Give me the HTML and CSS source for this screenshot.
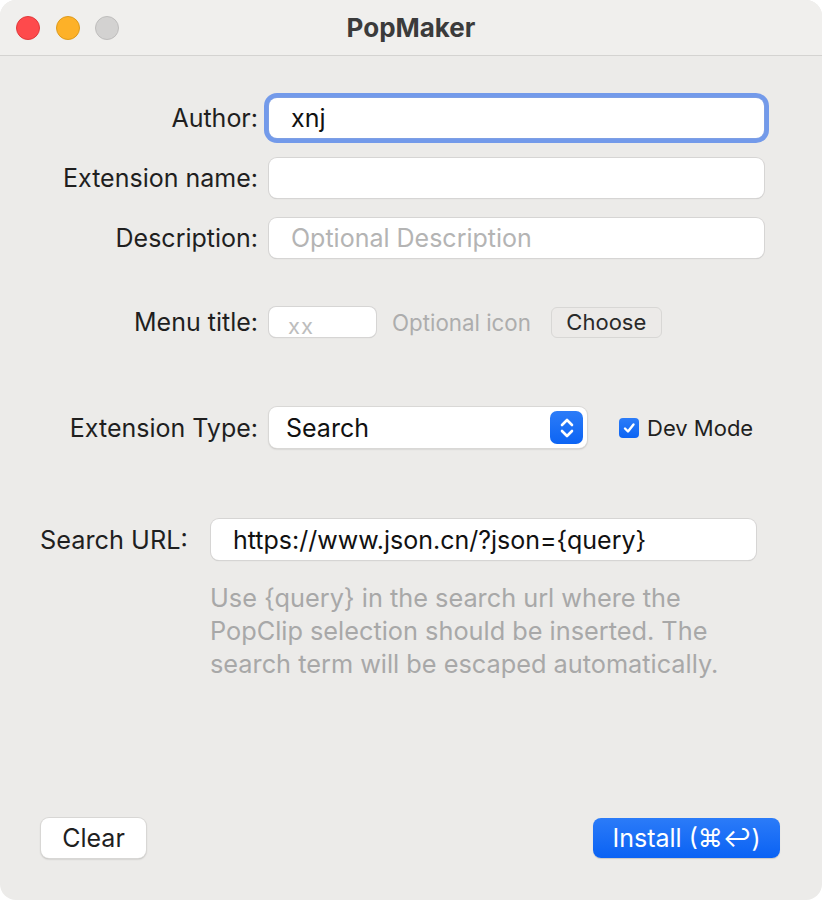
FILE: index.html
```html
<!DOCTYPE html>
<html>
<head>
<meta charset="utf-8">
<link rel="stylesheet" href="styles.css">
</head>
<body>
<div class="window">
  <div class="titlebar">
    <div class="lights">
      <span class="light red"></span>
      <span class="light yellow"></span>
      <span class="light grey"></span>
    </div>
    <div class="title">PopMaker</div>
  </div>
  <div class="content">
    <div class="row row-author">
      <label class="label">Author:</label>
      <div class="field focused"><span class="value">xnj</span></div>
    </div>
    <div class="row">
      <label class="label">Extension name:</label>
      <div class="field"></div>
    </div>
    <div class="row">
      <label class="label">Description:</label>
      <div class="field"><span class="placeholder">Optional Description</span></div>
    </div>
    <div class="row row-menu">
      <label class="label">Menu title:</label>
      <div class="field small"><span class="placeholder">xx</span></div>
      <span class="hint">Optional icon</span>
      <button class="choose">Choose</button>
    </div>
    <div class="row row-type">
      <label class="label">Extension Type:</label>
      <div class="popup">
        <span class="value">Search</span>
        <span class="stepper">
          <svg width="20" height="26" viewBox="0 0 20 26"><path d="M5 10 L10 5 L15 10 M5 16 L10 21 L15 16" fill="none" stroke="#fff" stroke-width="2.6" stroke-linecap="round" stroke-linejoin="round"/></svg>
        </span>
      </div>
      <span class="check">
        <span class="box"><svg width="14" height="14" viewBox="0 0 14 14"><path d="M3 7.5 L6 10.5 L11.5 3.5" fill="none" stroke="#fff" stroke-width="2.4" stroke-linecap="round" stroke-linejoin="round"/></svg></span>
        <span class="check-label">Dev Mode</span>
      </span>
    </div>
    <div class="url-row">
      <label class="url-label">Search URL:</label>
      <div class="field url"><span class="value">https://www.json.cn/?json={query}</span></div>
    </div>
    <p class="help">Use {query} in the search url where the PopClip selection should be inserted. The search term will be escaped automatically.</p>
    <div class="footer">
      <button class="btn clear">Clear</button>
      <button class="btn install">Install (⌘↩)</button>
    </div>
  </div>
</div>
</body>
</html>
```
FILE: styles.css
```css
html, body {
  margin: 0;
  padding: 0;
  background: #ffffff;
}
body {
  font-family: Inter, "Liberation Sans", sans-serif;
  color: #1f1f1f;
}
.window {
  width: 822px;
  height: 900px;
  border-radius: 16px;
  background: #ecebe9;
  overflow: hidden;
  display: flex;
  flex-direction: column;
  box-sizing: border-box;
}
.titlebar {
  height: 55px;
  background: #f0efed;
  border-bottom: 1px solid #d4d3d1;
  display: flex;
  align-items: center;
  position: relative;
  flex-shrink: 0;
}
.lights {
  display: flex;
  gap: 15.5px;
  padding-left: 16px;
  padding-top: 1px;
}
.light {
  width: 24px;
  height: 24px;
  border-radius: 50%;
  box-sizing: border-box;
}
.light.red { background: #fe4a4c; border: 1px solid #e0393b; }
.light.yellow { background: #fdb128; border: 1px solid #dd9a1c; }
.light.grey { background: #d3d2d1; border: 1px solid #bebdbc; }
.title {
  position: absolute;
  left: 0;
  right: 0;
  top: 0;
  height: 55px;
  line-height: 55px;
  text-align: center;
  font-weight: 700;
  font-size: 26px;
  color: #3b3b3b;
}
.content {
  flex: 1;
  display: flex;
  flex-direction: column;
  padding-top: 42px;
  font-size: 25px;
}
.row {
  display: flex;
  align-items: center;
  height: 40px;
  margin-bottom: 20px;
}
.label {
  width: 258px;
  text-align: right;
  margin-right: 11px;
  color: #1f1f1f;
  flex-shrink: 0;
}
.field {
  width: 495px;
  height: 40px;
  background: #fff;
  border-radius: 8px;
  box-shadow: 0 0 0 1px #d6d5d4, 0 1px 1px rgba(0,0,0,0.18);
  box-sizing: border-box;
  padding-left: 22px;
  display: flex;
  align-items: center;
}
.field.focused {
  box-shadow: 0 0 0 1px #7d9fe4, 0 0 0 5px #739aea;
}
.value { color: #111; }
.placeholder { color: #b4b4b4; }
.row-menu {
  margin-top: 29px;
  height: 30px;
}
.field.small {
  width: 107px;
  height: 30px;
  border-radius: 7px;
  padding-left: 19px;
  font-size: 22px;
  letter-spacing: 1px;
}
.field.small .placeholder { padding-top: 8px; color: #bdbdbd; }
.hint {
  margin-left: 16px;
  color: #adadad;
  font-size: 22.3px;
}
.choose {
  margin-left: 20px;
  width: 111px;
  height: 31px;
  border: 1px solid #d8d7d5;
  border-radius: 6px;
  background: #eceae8;
  font-family: inherit;
  font-size: 22px;
  color: #2a2a2a;
  padding: 0;
}
.row-type {
  margin-top: 50px;
  height: 41px;
}
.popup {
  width: 318px;
  height: 41px;
  background: #fff;
  border-radius: 8px;
  box-shadow: 0 0 0 1px #d9d8d6, 0 1px 2px rgba(0,0,0,0.25);
  display: flex;
  align-items: center;
  justify-content: space-between;
  padding: 0 4px 0 17px;
  box-sizing: border-box;
}
.stepper {
  width: 33px;
  height: 33px;
  border-radius: 7px;
  background: linear-gradient(#2c7cf8, #0c64f4);
  display: flex;
  align-items: center;
  justify-content: center;
}
.check {
  display: flex;
  align-items: center;
  margin-left: 32px;
}
.box {
  width: 20px;
  height: 20px;
  border-radius: 4px;
  background: linear-gradient(#2c7cf8, #0c64f4);
  display: flex;
  align-items: center;
  justify-content: center;
  margin-right: 8px;
}
.check-label { font-size: 22px; color: #1f1f1f; }
.url-row {
  display: flex;
  align-items: center;
  margin-top: 51px;
  height: 41px;
}
.url-label {
  margin-left: 40px;
  width: 160px;
  margin-right: 11px;
  font-size: 25.3px;
}
.field.url {
  width: 545px;
  height: 41px;
  padding-left: 22px;
}
.help {
  margin: 21px 0 0 210px;
  width: 540px;
  color: #a8a8a8;
  line-height: 33px;
  font-size: 25.3px;
}
.footer {
  margin-top: auto;
  display: flex;
  justify-content: space-between;
  padding: 0 42px 42px 41px;
}
.btn {
  height: 40px;
  border-radius: 8px;
  font-family: inherit;
  font-size: 25px;
  border: none;
  padding: 0;
}
.clear {
  width: 105px;
  background: #fff;
  color: #1f1f1f;
  box-shadow: 0 0 0 1px #d8d7d5, 0 1px 2px rgba(0,0,0,0.3);
}
.install {
  width: 187px;
  background: linear-gradient(#2b7bf8, #0a62f4);
  color: #fff;
  box-shadow: 0 1px 1px rgba(0,0,0,0.15);
}
```
